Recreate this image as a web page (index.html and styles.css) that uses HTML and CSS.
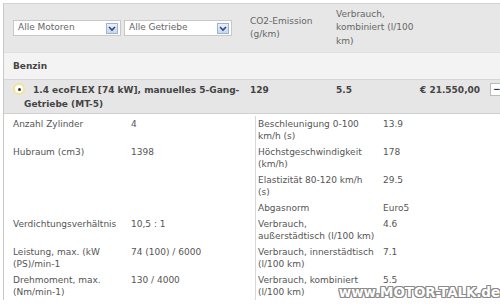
FILE: index.html
```html
<!DOCTYPE html>
<html>
<head>
<meta charset="utf-8">
<link rel="stylesheet" href="styles.css">
</head>
<body>
<div class="wrap">
  <div class="head">
    <div class="filters">
      <div class="sel"><span>Alle Motoren</span><svg class="arr" width="12" height="11" viewBox="0 0 12 11"><defs><linearGradient id="g1" x1="0" y1="0" x2="0" y2="1"><stop offset="0" stop-color="#eef3fb"/><stop offset="1" stop-color="#c4d4ec"/></linearGradient></defs><rect x="0.5" y="0.5" width="11" height="10" fill="url(#g1)" stroke="#9fb2cf"/><polyline points="3,4 6,7 9,4" fill="none" stroke="#2c4a7e" stroke-width="1.6"/></svg></div>
      <div class="sel"><span>Alle Getriebe</span><svg class="arr" width="12" height="11" viewBox="0 0 12 11"><rect x="0.5" y="0.5" width="11" height="10" fill="url(#g1)" stroke="#9fb2cf"/><polyline points="3,4 6,7 9,4" fill="none" stroke="#2c4a7e" stroke-width="1.6"/></svg></div>
    </div>
    <div class="hc co2">CO2-Emission<br>(g/km)</div>
    <div class="hc verb">Verbrauch,<br>kombiniert (l/100<br>km)</div>
  </div>
  <div class="group">Benzin</div>
  <div class="model">
    <div class="mname"><span class="radio"><span class="dot"></span></span>1.4 ecoFLEX [74 kW], manuelles 5-Gang-<br>Getriebe (MT-5)</div>
    <div class="mco2">129</div>
    <div class="mverb">5.5</div>
    <div class="price">€ 21.550,00</div>
    <div class="toggle">−</div>
  </div>
  <div class="details">
    <div class="l">Anzahl Zylinder</div><div class="v">4</div><div class="rl">Beschleunigung 0-100<br>km/h (s)</div><div class="rv">13.9</div>
    <div class="l">Hubraum (cm3)</div><div class="v">1398</div><div class="rl">Höchstgeschwindigkeit<br>(km/h)</div><div class="rv">178</div>
    <div class="l"></div><div class="v"></div><div class="rl">Elastizität 80-120 km/h<br>(s)</div><div class="rv">29.5</div>
    <div class="l"></div><div class="v"></div><div class="rl">Abgasnorm</div><div class="rv">Euro5</div>
    <div class="l">Verdichtungsverhältnis</div><div class="v">10,5 : 1</div><div class="rl">Verbrauch,<br>außerstädtisch (l/100 km)</div><div class="rv">4.6</div>
    <div class="l">Leistung, max. (kW<br>(PS)/min-1</div><div class="v">74 (100) / 6000</div><div class="rl">Verbrauch, innerstädtisch<br>(l/100 km)</div><div class="rv">7.1</div>
    <div class="l">Drehmoment, max.<br>(Nm/min-1)</div><div class="v">130 / 4000</div><div class="rl">Verbrauch, kombiniert<br>(l/100 km)</div><div class="rv">5.5</div>
  </div>
  <div class="wm">www.MOTOR-TALK.de</div>
</div>
</body>
</html>
```
FILE: styles.css
```css
* { box-sizing: border-box; }
html, body { margin: 0; padding: 0; background: #fff; }
body {
  font-family: "DejaVu Sans", Verdana, sans-serif;
  font-size: 9px;
  color: #555;
  width: 500px;
  height: 304px;
  overflow: hidden;
  padding: 3px 0 0 3px;
}
.wrap {
  position: relative;
  border-left: 1px solid #c9c9c9;
  border-top: 1px solid #d4d4d4;
  height: 297px;
  border-bottom: 1px solid #c9c9c9;
  width: 497px;
}
.head {
  display: flex;
  align-items: center;
  background: #e7e7e7;
  height: 48px;
  color: #666;
  line-height: 13.5px;
}
.filters {
  width: 246px;
  display: flex;
  gap: 3px;
  padding-left: 9px;
}
.sel {
  width: 108px;
  height: 16px;
  background: #fff;
  border: 1px solid #c8c8c8;
  display: flex;
  align-items: center;
  justify-content: space-between;
  padding: 0 2px 0 4px;
  color: #666;
}
.arr { display: block; }
.co2 { width: 86px; }
.verb { width: 84px; }
.group {
  height: 28px;
  background: #f3f3f3;
  border-top: 1px solid #e0e0e0;
  border-bottom: 1px solid #d6d6d6;
  font-weight: bold;
  color: #444;
  padding-left: 9px;
  line-height: 26px;
}
.model {
  display: flex;
  background: #e6e6e6;
  border-bottom: 1px solid #d0d0d0;
  height: 34px;
  font-weight: bold;
  color: #444;
  line-height: 14px;
  padding-top: 3px;
}
.model > div { flex-shrink: 0; }
.mname { width: 246px; padding-left: 20px; white-space: nowrap; }
.radio {
  display: inline-block;
  width: 12px;
  height: 12px;
  margin-left: -11px;
  margin-right: 8px;
  border-radius: 50%;
  background: #fff;
  border: 2px solid #f3e39a;
  vertical-align: -2px;
  position: relative;
}
.dot {
  position: absolute;
  left: 2.5px;
  top: 2.5px;
  width: 3px;
  height: 3px;
  border-radius: 50%;
  background: #333;
}
.mco2 { width: 86px; }
.mverb { width: 84px; }
.price { width: 60px; white-space: nowrap; }
.toggle {
  margin-left: 10px;
  width: 10px;
  height: 13px;
  background: #fff;
  border: 1px solid #bbb;
  border-right: none;
  line-height: 11px;
  padding-left: 2px;
  color: #333;
}
.details {
  display: grid;
  grid-template-columns: 127px 124px 128px 1fr;
  background: #fff;
  line-height: 12px;
  padding-top: 2px;
}
.details > div { padding: 2px 0; white-space: nowrap; }
.l { padding-left: 9px !important; }
.rl { border-left: 1px solid #d8d8d8; padding-left: 2px !important; }
.wm {
  position: absolute;
  right: 0;
  bottom: 0;
  font-family: "DejaVu Sans", sans-serif;
  font-weight: bold;
  font-size: 13.5px;
  line-height: 14px;
  color: #fff;
  letter-spacing: -0.1px;
  text-shadow: 1px 0 0 #8a8a8a, -1px 0 0 #8a8a8a, 0 1px 0 #8a8a8a, 0 -1px 0 #8a8a8a, 1px 1px 0 #8a8a8a, -1px -1px 0 #8a8a8a, 1px -1px 0 #8a8a8a, -1px 1px 0 #8a8a8a;
}
```
